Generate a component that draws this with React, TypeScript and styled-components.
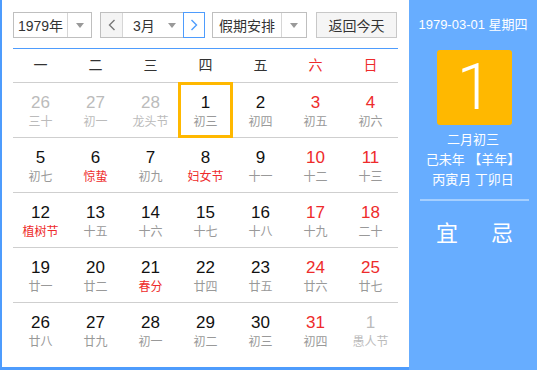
import React from 'react'
import styled, { createGlobalStyle } from 'styled-components'

const GlobalStyle = createGlobalStyle`
  html, body {
    margin: 0;
    padding: 0;
    background: #fff;
  }
  body {
    font-family: 'Liberation Sans', 'Noto Sans CJK SC', sans-serif;
  }
`

const BLUE = '#4e9cfd'
const RED = '#ee2b2b'

type Day = {
  num: number
  lunar: string
  other?: boolean
  weekend?: boolean
  festival?: boolean
  selected?: boolean
}

const weeks: Day[][] = [
  [
    { num: 26, lunar: '三十', other: true },
    { num: 27, lunar: '初一', other: true },
    { num: 28, lunar: '龙头节', other: true },
    { num: 1, lunar: '初三', selected: true },
    { num: 2, lunar: '初四' },
    { num: 3, lunar: '初五', weekend: true },
    { num: 4, lunar: '初六', weekend: true },
  ],
  [
    { num: 5, lunar: '初七' },
    { num: 6, lunar: '惊蛰', festival: true },
    { num: 7, lunar: '初九' },
    { num: 8, lunar: '妇女节', festival: true },
    { num: 9, lunar: '十一' },
    { num: 10, lunar: '十二', weekend: true },
    { num: 11, lunar: '十三', weekend: true },
  ],
  [
    { num: 12, lunar: '植树节', festival: true },
    { num: 13, lunar: '十五' },
    { num: 14, lunar: '十六' },
    { num: 15, lunar: '十七' },
    { num: 16, lunar: '十八' },
    { num: 17, lunar: '十九', weekend: true },
    { num: 18, lunar: '二十', weekend: true },
  ],
  [
    { num: 19, lunar: '廿一' },
    { num: 20, lunar: '廿二' },
    { num: 21, lunar: '春分', festival: true },
    { num: 22, lunar: '廿四' },
    { num: 23, lunar: '廿五' },
    { num: 24, lunar: '廿六', weekend: true },
    { num: 25, lunar: '廿七', weekend: true },
  ],
  [
    { num: 26, lunar: '廿八' },
    { num: 27, lunar: '廿九' },
    { num: 28, lunar: '初一' },
    { num: 29, lunar: '初二' },
    { num: 30, lunar: '初三' },
    { num: 31, lunar: '初四', weekend: true },
    { num: 1, lunar: '愚人节', other: true },
  ],
]

const weekdays = ['一', '二', '三', '四', '五', '六', '日']

const Frame = styled.div`
  display: flex;
  width: 537px;
  height: 370px;
  box-sizing: border-box;
`

const Main = styled.div`
  width: 409px;
  box-sizing: border-box;
  border-left: 2px solid ${BLUE};
  border-bottom: 3px solid ${BLUE};
  padding: 12px 11px 0;
  background: #fff;
`

const Toolbar = styled.div`
  display: flex;
  align-items: stretch;
  height: 26px;
`

const SelectBox = styled.div<{ $width: number; $gap?: number }>`
  display: flex;
  width: ${(p) => p.$width}px;
  margin-right: ${(p) => p.$gap ?? 0}px;
  box-sizing: border-box;
  border: 1px solid #bfbfbf;
  background: #fff;
  font-size: 14px;
  color: #333;
`

const SelectText = styled.div`
  flex: 1;
  display: flex;
  align-items: center;
  justify-content: center;
  border-right: 1px solid #d6d6d6;
`

const Caret = styled.div<{ $width: number }>`
  width: ${(p) => p.$width}px;
  display: flex;
  align-items: center;
  justify-content: center;
  &::after {
    content: '';
    border-left: 4px solid transparent;
    border-right: 4px solid transparent;
    border-top: 5px solid #999;
  }
`

const MonthGroup = styled.div`
  display: flex;
  width: 105px;
  margin-right: 7px;
  box-sizing: border-box;
  border: 1px solid #bfbfbf;
  border-right: none;
  font-size: 14px;
  color: #333;
`

const NavButton = styled.div<{ $active?: boolean }>`
  width: 22px;
  display: flex;
  align-items: center;
  justify-content: center;
  background: ${(p) => (p.$active ? '#fff' : '#f4f4f4')};
  box-sizing: border-box;
  ${(p) =>
    p.$active
      ? `border: 1px solid ${BLUE}; margin: -1px 0;`
      : 'border-right: 1px solid #d6d6d6;'}
`

const MonthText = styled.div`
  flex: 1;
  display: flex;
  align-items: center;
  padding-left: 10px;
`

const MonthCaret = styled(Caret)``

const TodayButton = styled.div`
  width: 81px;
  margin-left: auto;
  margin-right: 1px;
  box-sizing: border-box;
  border: 1px solid #c8c8c8;
  background: #f5f5f5;
  display: flex;
  align-items: center;
  justify-content: center;
  font-size: 14px;
  color: #333;
`

const Divider = styled.div`
  height: 1px;
  background: ${BLUE};
  margin-top: 10px;
`

const Grid = styled.div`
  display: grid;
  grid-template-columns: repeat(7, 55px);
`

const HeaderCell = styled.div<{ $red?: boolean }>`
  height: 33px;
  line-height: 33px;
  text-align: center;
  font-size: 14px;
  color: ${(p) => (p.$red ? RED : '#333')};
  border-bottom: 1px solid #cfcfcf;
`

const DayCell = styled.div<{ $last?: boolean; $selected?: boolean }>`
  height: 55px;
  box-sizing: border-box;
  padding-top: 10px;
  text-align: center;
  position: relative;
  border-bottom: ${(p) => (p.$last ? 'none' : '1px solid #cfcfcf')};
  &::before {
    content: '';
    display: ${(p) => (p.$selected ? 'block' : 'none')};
    position: absolute;
    left: 0;
    right: 0;
    top: -1px;
    bottom: -1px;
    border: 3px solid #ffb800;
  }
`

const DayNum = styled.div<{ $color: string }>`
  font-size: 17px;
  line-height: 20px;
  color: ${(p) => p.$color};
`

const Lunar = styled.div<{ $color: string }>`
  font-size: 12px;
  line-height: 18px;
  color: ${(p) => p.$color};
`

const Side = styled.div`
  flex: 1;
  background: #67adff;
  color: #fff;
  display: flex;
  flex-direction: column;
  align-items: center;
`

const SideDate = styled.div`
  margin-top: 16px;
  font-size: 13px;
  line-height: 18px;
`

const BigDay = styled.div`
  margin-top: 16px;
  margin-left: 3px;
  width: 75px;
  height: 75px;
  border-radius: 3px;
  background: #ffb800;
  display: flex;
  align-items: center;
  justify-content: center;
  font-size: 64px;
  font-weight: 300;
  font-family: Roboto, 'Liberation Sans', sans-serif;
`

const LunarInfo = styled.div`
  margin-top: 5px;
  font-size: 13px;
  line-height: 20px;
  text-align: center;
`

const SideRule = styled.div`
  width: 109px;
  height: 2px;
  margin-top: 9px;
  margin-left: 2px;
  background: #a5cfff;
`

const YiJi = styled.div`
  display: flex;
  gap: 33px;
  margin-top: 14px;
  margin-left: 3px;
  font-size: 22px;
`

const Chevron = ({ dir, color }: { dir: 'left' | 'right'; color: string }) => (
  <svg width="8" height="12" viewBox="0 0 8 12">
    <path
      d={dir === 'left' ? 'M6.5 1 L1.5 6 L6.5 11' : 'M1.5 1 L6.5 6 L1.5 11'}
      fill="none"
      stroke={color}
      strokeWidth="1.4"
    />
  </svg>
)

const dayColor = (d: Day) => (d.other ? '#bbbbbb' : d.weekend ? RED : '#111')
const lunarColor = (d: Day) =>
  d.festival ? RED : d.other ? '#bbbbbb' : '#999999'

const App: React.FC = () => {
  return (
    <>
      <GlobalStyle />
      <Frame>
        <Main>
          <Toolbar>
            <SelectBox $width={79} $gap={8}>
              <SelectText>1979年</SelectText>
              <Caret $width={23} />
            </SelectBox>
            <MonthGroup>
              <NavButton>
                <Chevron dir="left" color="#777" />
              </NavButton>
              <MonthText>3月</MonthText>
              <MonthCaret $width={22} />
              <NavButton $active>
                <Chevron dir="right" color={BLUE} />
              </NavButton>
            </MonthGroup>
            <SelectBox $width={95}>
              <SelectText>假期安排</SelectText>
              <Caret $width={24} />
            </SelectBox>
            <TodayButton>返回今天</TodayButton>
          </Toolbar>
          <Divider />
          <Grid>
            {weekdays.map((w, i) => (
              <HeaderCell key={w} $red={i >= 5}>
                {w}
              </HeaderCell>
            ))}
            {weeks.map((week, wi) =>
              week.map((d, di) => (
                <DayCell
                  key={`${wi}-${di}`}
                  $last={wi === weeks.length - 1}
                  $selected={d.selected}
                >
                  <DayNum $color={dayColor(d)}>{d.num}</DayNum>
                  <Lunar $color={lunarColor(d)}>{d.lunar}</Lunar>
                </DayCell>
              ))
            )}
          </Grid>
        </Main>
        <Side>
          <SideDate>1979-03-01 星期四</SideDate>
          <BigDay>1</BigDay>
          <LunarInfo>
            <div>二月初三</div>
            <div>己未年 【羊年】</div>
            <div>丙寅月 丁卯日</div>
          </LunarInfo>
          <SideRule />
          <YiJi>
            <span>宜</span>
            <span>忌</span>
          </YiJi>
        </Side>
      </Frame>
    </>
  )
}

export default App
